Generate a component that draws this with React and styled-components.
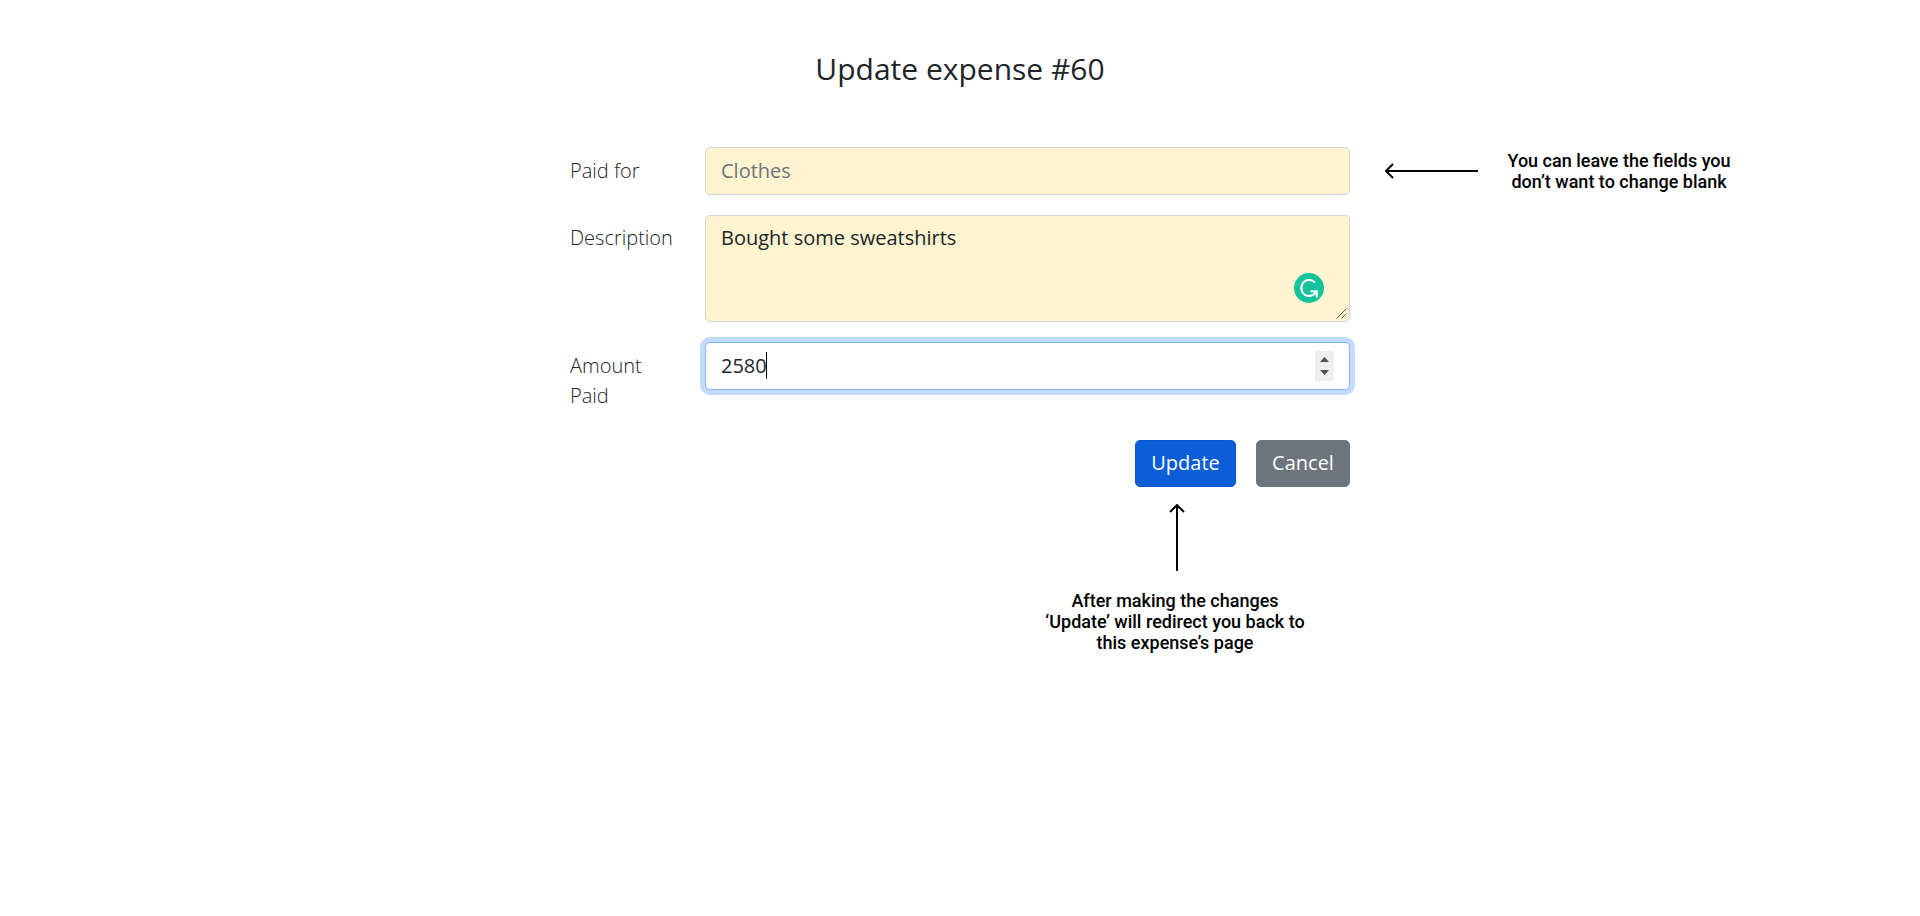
import React from "react";
import styled, { createGlobalStyle } from "styled-components";

const GlobalStyle = createGlobalStyle`
  *, *::before, *::after { box-sizing: border-box; }
  body {
    margin: 0;
    background: #fff;
    color: #212529;
    font: 400 20px/30px "Open Sans", sans-serif;
  }
`;

const Page = styled.main`
  min-height: 916px;
  overflow: hidden;
`;

const Title = styled.h1`
  margin: 51px 0 60px;
  font-size: 30px;
  font-weight: 400;
  line-height: 36px;
  text-align: center;
`;

const Form = styled.div`
  margin-left: 570px;
  display: flex;
  flex-direction: column;
  gap: 20px;
`;

const Row = styled.div`
  display: flex;
  align-items: flex-start;
  height: ${(p) => p.$height}px;
`;

const Label = styled.label`
  width: 135px;
  padding: ${(p) => (p.$multiline ? 8 : 9)}px 20px 0 0;
  font-weight: 300;
`;

const Field = styled.div`
  display: flex;
  justify-content: space-between;
  position: relative;
  width: 645px;
  height: 100%;
  padding: ${(p) => (p.$multiline ? 7 : 8)}px 15px;
  border: 1px solid ${(p) => (p.$focused ? "#86b7fe" : "#ced4da")};
  border-radius: 5px;
  background: ${(p) => (p.$focused ? "#fff" : "#fff4d0")};
  color: ${(p) => (p.$placeholder ? "#6c757d" : "#212529")};
  box-shadow: ${(p) => (p.$focused ? "0 0 0 5px #c2dbfe" : "none")};
`;

const Value = styled.span`
  height: 30px;
`;

const Caret = styled.i`
  display: inline-block;
  width: 1px;
  height: 27px;
  margin: 1px 0 0 -1px;
  background: #000;
  vertical-align: top;
`;

const Spinner = styled.svg`
  width: 19px;
  height: 30px;
`;

const Badge = styled.svg`
  position: absolute;
  right: 25px;
  top: 57px;
  width: 30px;
  height: 30px;
`;

const Grip = styled.svg`
  position: absolute;
  right: 1px;
  bottom: 1px;
  width: 12px;
  height: 12px;
`;

const ArrowLeft = styled.svg`
  width: 94px;
  height: 16px;
  margin-left: 35px;
  align-self: center;
`;

const ArrowUp = styled.svg`
  width: 16px;
  height: 68px;
`;

const Note = styled.p`
  margin: 0;
  color: #000;
  font: 500 18px/21px Roboto, sans-serif;
  text-align: center;
  white-space: nowrap;
`;

const SideNote = styled(Note)`
  align-self: center;
  width: 226px;
  margin-left: 27px;
`;

const Actions = styled.div`
  display: flex;
  justify-content: flex-end;
  gap: 20px;
  width: 780px;
  margin-top: 30px;
`;

const Button = styled.button`
  width: ${(p) => p.$width}px;
  height: 47px;
  padding: 0 0 1px;
  border: 1px solid ${(p) => p.$border};
  border-radius: 5px;
  background: ${(p) => p.$fill};
  color: #fff;
  font: inherit;
`;

const Footnote = styled.div`
  display: flex;
  flex-direction: column;
  align-items: center;
  gap: 18px;
  width: 270px;
  margin: -3px 0 0 470px;
`;

const ArrowSlot = styled.div`
  display: flex;
  padding-left: 4px;
`;

export default function App() {
  return (
    <>
      <GlobalStyle />
      <Page>
        <Title>Update expense #60</Title>
        <Form>
          <Row $height={48}>
            <Label>Paid for</Label>
            <Field $placeholder>
              <Value>Clothes</Value>
            </Field>
            <ArrowLeft viewBox="0 0 94 16" fill="none" stroke="#000" strokeWidth="2">
              <path d="M1 8H93M8 1L1 8L8 15" />
            </ArrowLeft>
            <SideNote>
              You can leave the fields you
              <br />
              don’t want to change blank
            </SideNote>
          </Row>
          <Row $height={107}>
            <Label $multiline>Description</Label>
            <Field $multiline>
              <Value>Bought some sweatshirts</Value>
              <Badge viewBox="0 0 30 30" fill="none">
                <circle cx="15" cy="15" r="15" fill="#15c39a" />
                <path d="M21.2 9.6A8 8 0 1 0 15 23Q19 23 21.6 19.6" stroke="#fff" strokeWidth="2" />
                <path d="M16.5 17.2H23.8V24.5H21.8V20.2L19 19.2H16.5Z" fill="#fff" />
              </Badge>
              <Grip viewBox="0 0 12 12" stroke="#5b584d" strokeWidth="1">
                <path d="M0.5 10.5L10.5 0.5M5.5 10.5L10.5 5.5" />
              </Grip>
            </Field>
          </Row>
          <Row $height={48}>
            <Label>Amount Paid</Label>
            <Field $focused>
              <Value>
                2580
                <Caret />
              </Value>
              <Spinner viewBox="0 0 19 30">
                <path d="M0 0H19V30H0Z" fill="#efefef" />
                <path d="M5 11L9.5 6L14 11ZM5 19L9.5 24L14 19Z" fill="#505050" />
              </Spinner>
            </Field>
          </Row>
          <Actions>
            <Button $width={101} $fill="#0b5ed7" $border="#0a58ca">Update</Button>
            <Button $width={94} $fill="#6c757d" $border="#6c757d">Cancel</Button>
          </Actions>
          <Footnote>
            <ArrowSlot>
              <ArrowUp viewBox="0 0 16 68" fill="none" stroke="#000" strokeWidth="2">
                <path d="M8 67V1M1 8L8 1L15 8" />
              </ArrowUp>
            </ArrowSlot>
            <Note>
              After making the changes
              <br />
              ‘Update’ will redirect you back to
              <br />
              this expense’s page
            </Note>
          </Footnote>
        </Form>
      </Page>
    </>
  );
}
